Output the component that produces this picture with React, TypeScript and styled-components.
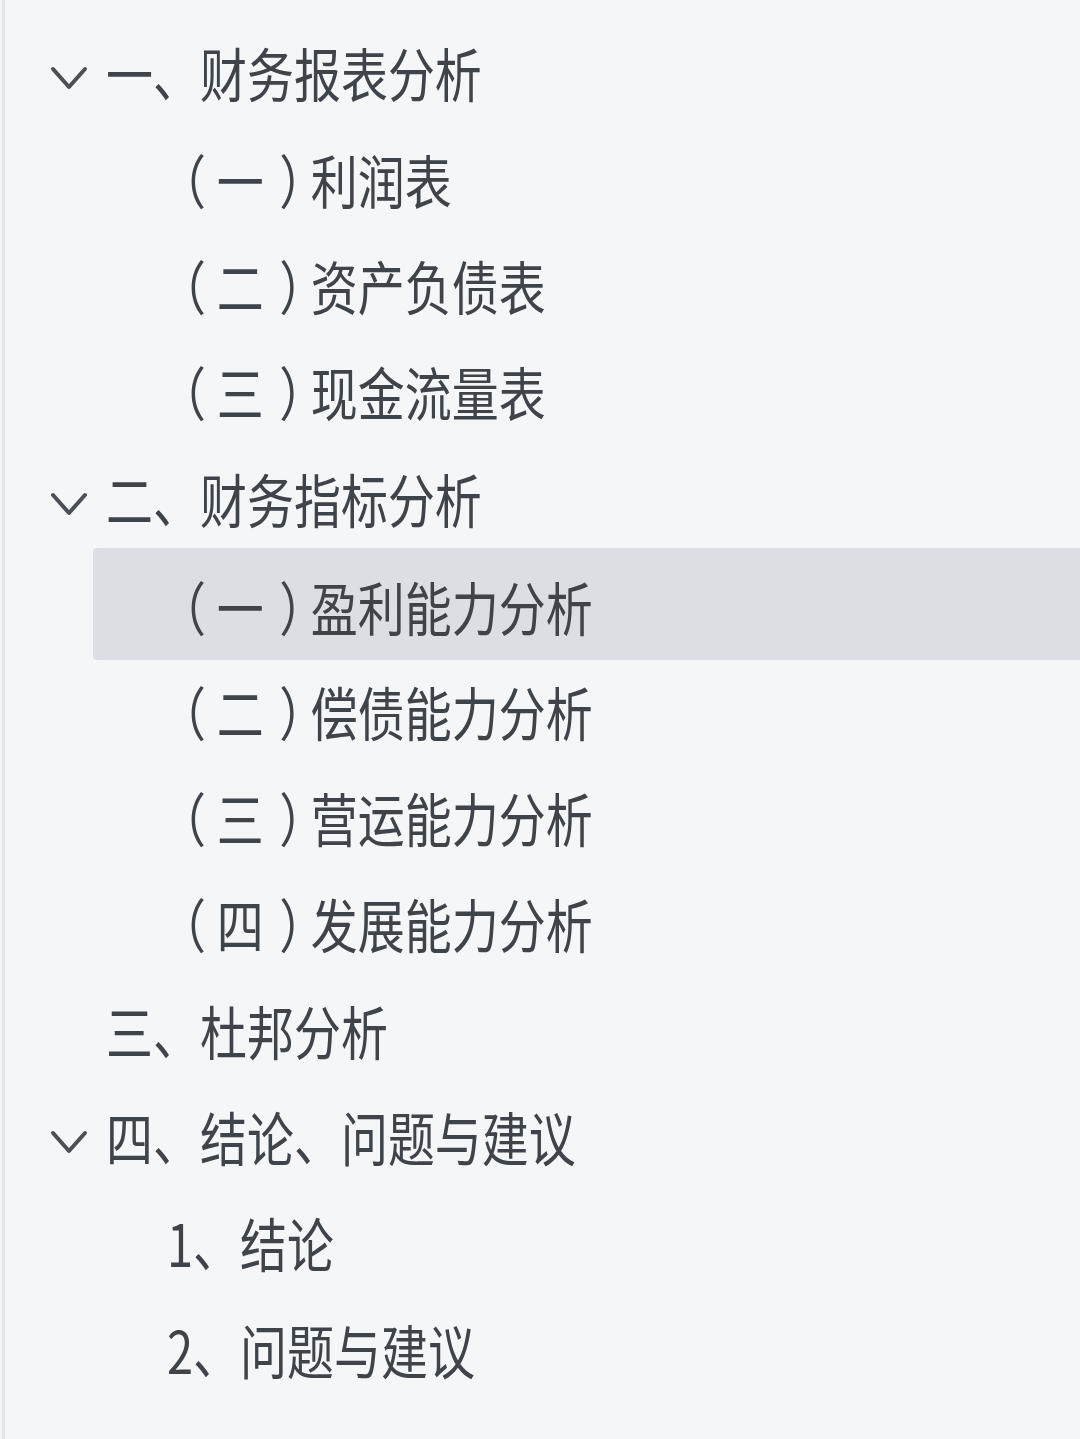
import React from 'react';
import styled, { createGlobalStyle } from 'styled-components';

const GlobalStyle = createGlobalStyle`
  html, body {
    margin: 0;
    padding: 0;
    background: #f4f6f8;
  }
  #root {
    min-height: 100vh;
  }
`;

const Panel = styled.nav`
  box-sizing: border-box;
  width: 1080px;
  min-height: 1439px;
  padding: 19px 2px 0 0;
  background: #f4f6f8;
  border-left: 3px solid #e4e6ea;
  margin-left: 2px;
  font-family: 'Noto Sans CJK SC', 'Noto Sans', sans-serif;
  color: #3f434a;
`;

const Group = styled.div`
  display: flex;
  flex-direction: column;
`;

const Children = styled.div`
  display: flex;
  flex-direction: column;
  margin-left: 88px;
`;

const Row = styled.div<{ $level: number; $active?: boolean }>`
  box-sizing: border-box;
  display: flex;
  align-items: center;
  height: ${({ $active }) => ($active ? '112.4px' : '106.4px')};
  padding-left: ${({ $level }) => ($level === 1 ? '45px' : '74px')};
  padding-top: ${({ $active }) => ($active ? '3px' : '0')};
  margin: ${({ $active }) => ($active ? '-3px 0' : '0')};
  border-radius: 4px 0 0 4px;
  background: ${({ $active }) => ($active ? '#dbdfe3' : 'transparent')};
  cursor: pointer;
`;

const Toggle = styled.span`
  display: flex;
  align-items: center;
  justify-content: flex-start;
  width: 56px;
  height: 40px;
  margin-top: 14px;
  flex-shrink: 0;
`;

const Label = styled.span`
  display: inline-block;
  font-size: 58px;
  line-height: 1;
  white-space: nowrap;
  transform: scaleX(0.81);
  transform-origin: left center;
`;

/* full-width bracket, trimmed to its ink and centred in a full em cell */
const Bracket = styled.span`
  display: inline-block;
  width: 1em;
  text-align: center;
  text-indent: 0.16em;
  font-feature-settings: 'halt' 1;
`;

const Ordinal = styled.span`
  display: inline-block;
  text-indent: 0.06em;
`;

const Chevron = () => (
  <svg width="38" height="28" viewBox="0 0 38 28" fill="none">
    <path
      d="M3 4 L19 22 L35 4"
      stroke="#4b4f56"
      strokeWidth="4"
      strokeLinecap="round"
      strokeLinejoin="round"
    />
  </svg>
);

type Item = {
  key: string;
  // ordinal shown inside full-width brackets, e.g. （一）
  ordinal?: string;
  text: string;
};

type Section = {
  title: string;
  items: Item[];
};

const bracketed = (ordinal: string, text: string): Item => ({
  key: `（${ordinal}）${text}`,
  ordinal,
  text,
});

const plain = (text: string): Item => ({ key: text, text });

const sections: Section[] = [
  {
    title: '一、财务报表分析',
    items: [bracketed('一', '利润表'), bracketed('二', '资产负债表'), bracketed('三', '现金流量表')],
  },
  {
    title: '二、财务指标分析',
    items: [
      bracketed('一', '盈利能力分析'),
      bracketed('二', '偿债能力分析'),
      bracketed('三', '营运能力分析'),
      bracketed('四', '发展能力分析'),
    ],
  },
  { title: '三、杜邦分析', items: [] },
  { title: '四、结论、问题与建议', items: [plain('1、结论'), plain('2、问题与建议')] },
];

const activeKey = '二、财务指标分析/（一）盈利能力分析';

export default function App() {
  return (
    <>
      <GlobalStyle />
      <Panel>
        {sections.map(section => (
          <Group key={section.title}>
            <Row $level={1}>
              <Toggle>{section.items.length > 0 && <Chevron />}</Toggle>
              <Label>{section.title}</Label>
            </Row>
            {section.items.length > 0 && (
              <Children>
                {section.items.map(item => (
                  <Row
                    key={item.key}
                    $level={2}
                    $active={`${section.title}/${item.key}` === activeKey}
                  >
                    <Label>
                      {item.ordinal && (
                        <>
                          <Bracket>（</Bracket>
                          <Ordinal>{item.ordinal}</Ordinal>
                          <Bracket>）</Bracket>
                        </>
                      )}
                      {item.text}
                    </Label>
                  </Row>
                ))}
              </Children>
            )}
          </Group>
        ))}
      </Panel>
    </>
  );
}
